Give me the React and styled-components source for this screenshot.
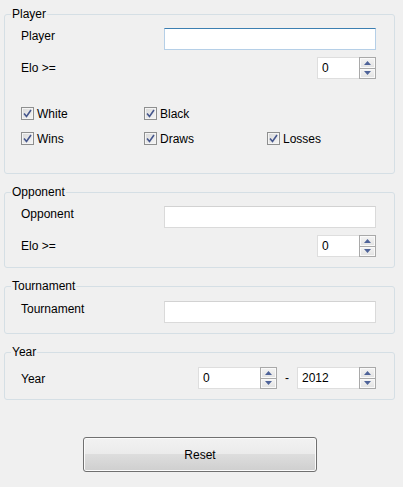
import React from 'react';
import styled, { createGlobalStyle } from 'styled-components';

const GlobalStyle = createGlobalStyle`
  html, body {
    margin: 0;
    padding: 0;
    background: #f0f0f0;
  }
  body {
    font-family: "Liberation Sans", Arial, sans-serif;
    font-size: 12px;
    color: #000000;
  }
`;

const Page = styled.div`
  width: 403px;
  height: 487px;
  box-sizing: border-box;
  padding: 0 0 0 4px;
  background: #f0f0f0;
`;

const Group = styled.fieldset`
  width: 391px;
  box-sizing: border-box;
  margin: ${p => (p.$first ? '7px' : '11px')} 0 0 0;
  padding: 0;
  min-width: 0;
  border: 1px solid #d5dfe5;
  border-radius: 3px;
`;

const Legend = styled.legend`
  margin-left: 6px;
  padding: 0 1px;
  line-height: 14px;
`;

const Body = styled.div`
  padding: ${p => p.$top || 7}px 18px 10px 16px;
  display: flex;
  flex-direction: column;
  gap: 7px;
`;

const Row = styled.div`
  display: flex;
  align-items: flex-start;
  justify-content: space-between;
  height: 22px;
`;

const Label = styled.span`
  line-height: ${p => (p.$lift ? 16 : 22)}px;
  padding-top: ${p => p.$drop || 0}px;
`;

const TextField = styled.div`
  width: 212px;
  height: 22px;
  box-sizing: border-box;
  background: #ffffff;
  border: 1px solid ${p => (p.$focus ? '#b5cfe7' : '#dadada')};
  border-top-color: ${p => (p.$focus ? '#3c7fb1' : '#d2d2d2')};
`;

const SpinWrap = styled.div`
  display: flex;
  width: ${p => p.$width}px;
  height: 22px;
`;

const SpinField = styled.div`
  flex: 1;
  box-sizing: border-box;
  background: #ffffff;
  border: 1px solid #dedede;
  border-right: none;
  padding-left: 4px;
  line-height: 20px;
`;

const SpinButtons = styled.div`
  width: 17px;
  box-sizing: border-box;
  display: flex;
  flex-direction: column;
  gap: 1px;
  border: 1px solid #a9a9a9;
  background: #a9a9a9;
`;

const SpinButton = styled.div`
  flex: 1;
  display: flex;
  align-items: center;
  justify-content: center;
  box-shadow: inset 0 0 0 1px #fafafa;
  background: linear-gradient(#f4f4f4, #e2e2e2);
`;

const Arrow = ({ up }) => (
  <svg width="7" height="4" viewBox="0 0 7 4">
    <path d={up ? 'M0 4 L3.5 0 L7 4 Z' : 'M0 0 L3.5 4 L7 0 Z'} fill="#4e6399" />
  </svg>
);

const SpinBox = ({ value, width }) => (
  <SpinWrap $width={width}>
    <SpinField>{value}</SpinField>
    <SpinButtons>
      <SpinButton><Arrow up /></SpinButton>
      <SpinButton><Arrow /></SpinButton>
    </SpinButtons>
  </SpinWrap>
);

const Range = styled.div`
  display: flex;
  align-items: center;
  gap: 8px;
`;

const Dash = styled.span`
  line-height: 22px;
`;

const Checks = styled.div`
  display: grid;
  grid-template-columns: repeat(3, 123px);
  row-gap: 12px;
  margin: 21px 0 18px 0;
`;

const Check = styled.label`
  display: flex;
  align-items: center;
  gap: 3px;
  height: 13px;
  grid-column: ${p => p.$col};
`;

const Box = styled.span`
  width: 13px;
  height: 13px;
  box-sizing: border-box;
  display: flex;
  align-items: center;
  justify-content: center;
  border: 1px solid #8e8f8f;
  box-shadow: inset 0 0 0 1px #f4f4f4;
  background: linear-gradient(135deg, #d8d8d8, #f6f6f6);
`;

const Tick = () => (
  <svg width="9" height="9" viewBox="0 0 9 9">
    <path d="M1 4.5 L3.5 7.5 L8 1" fill="none" stroke="#45568c" strokeWidth="1.6" />
  </svg>
);

const CheckItem = ({ label, col }) => (
  <Check $col={col}>
    <Box><Tick /></Box>
    <span>{label}</span>
  </Check>
);

const ButtonRow = styled.div`
  display: flex;
  margin-top: 37px;
  padding-left: 79px;
`;

const ResetButton = styled.button`
  width: 234px;
  height: 35px;
  border: 1px solid #707070;
  border-radius: 3px;
  box-shadow: inset 0 0 0 1px #fbfbfb;
  background: linear-gradient(#f2f2f2 0%, #ebebeb 48%, #dddddd 50%, #cfcfcf 100%);
  font-family: "Liberation Sans", Arial, sans-serif;
  font-size: 12px;
  color: #000000;
  padding: 0;
`;

export default function App() {
  return (
    <Page>
      <GlobalStyle />
      <Group $first>
        <Legend>Player</Legend>
        <Body>
          <Row>
            <Label $lift>Player</Label>
            <TextField $focus />
          </Row>
          <Row>
            <Label>Elo &gt;=</Label>
            <SpinBox value="0" width={59} />
          </Row>
          <Checks>
            <CheckItem label="White" col={1} />
            <CheckItem label="Black" col={2} />
            <CheckItem label="Wins" col={1} />
            <CheckItem label="Draws" col={2} />
            <CheckItem label="Losses" col={3} />
          </Checks>
        </Body>
      </Group>
      <Group>
        <Legend>Opponent</Legend>
        <Body>
          <Row>
            <Label $lift>Opponent</Label>
            <TextField />
          </Row>
          <Row>
            <Label>Elo &gt;=</Label>
            <SpinBox value="0" width={59} />
          </Row>
        </Body>
      </Group>
      <Group>
        <Legend>Tournament</Legend>
        <Body $top={8}>
          <Row>
            <Label $lift>Tournament</Label>
            <TextField />
          </Row>
        </Body>
      </Group>
      <Group>
        <Legend>Year</Legend>
        <Body $top={8}>
          <Row>
            <Label $drop={1}>Year</Label>
            <Range>
              <SpinBox value="0" width={79} />
              <Dash>-</Dash>
              <SpinBox value="2012" width={79} />
            </Range>
          </Row>
        </Body>
      </Group>
      <ButtonRow>
        <ResetButton type="button">Reset</ResetButton>
      </ButtonRow>
    </Page>
  );
}
